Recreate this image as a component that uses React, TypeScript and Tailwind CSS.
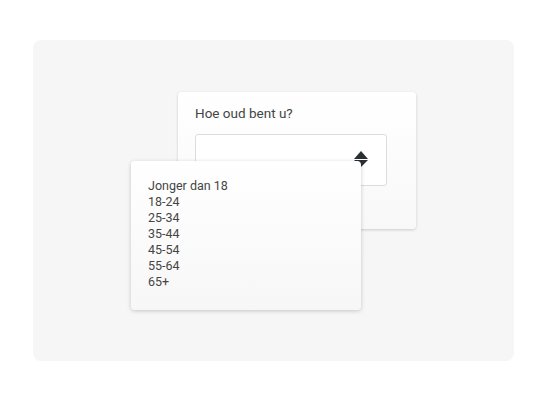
const options = ["Jonger dan 18", "18-24", "25-34", "35-44", "45-54", "55-64", "65+"];

export default function App() {
  return (
    <div className="w-[547px] h-[400px] bg-white flex items-center justify-center" style={{ fontFamily: "Roboto, 'Liberation Sans', sans-serif" }}>
      <div className="relative w-[481px] h-[321px] rounded-lg bg-[#f6f6f6]">
        <div className="absolute left-[145px] top-[52px] w-[238px] h-[137px] rounded-[4px] bg-gradient-to-b from-white to-[#f8f8f8] shadow-[0_1px_3px_rgba(0,0,0,0.18)] px-[17px] pt-[13px]">
          <div className="text-[13.5px] leading-[16px] text-[#454545]">Hoe oud bent u?</div>
          <div className="mt-[13px] h-[52px] w-[192px] rounded-[3px] border border-[#dcdcdc] bg-white flex items-center justify-end pr-[18px]">
            <svg width="14" height="17" viewBox="0 0 14 17">
              <path d="M7 0 L14 8 L0 8 Z" fill="#2a2f33" />
              <path d="M0 9 L14 9 L7 16 Z" fill="#2a2f33" />
            </svg>
          </div>
        </div>
        <div className="absolute left-[98px] top-[121px] w-[230px] h-[149px] rounded-[4px] bg-gradient-to-b from-white to-[#f7f7f7] shadow-[0_1px_4px_rgba(0,0,0,0.2)] pl-[17px] pt-[17px]">
          {options.map((o) => (
            <div key={o} className="text-[12.5px] leading-[16px] text-[#454545]">{o}</div>
          ))}
        </div>
      </div>
    </div>
  );
}
